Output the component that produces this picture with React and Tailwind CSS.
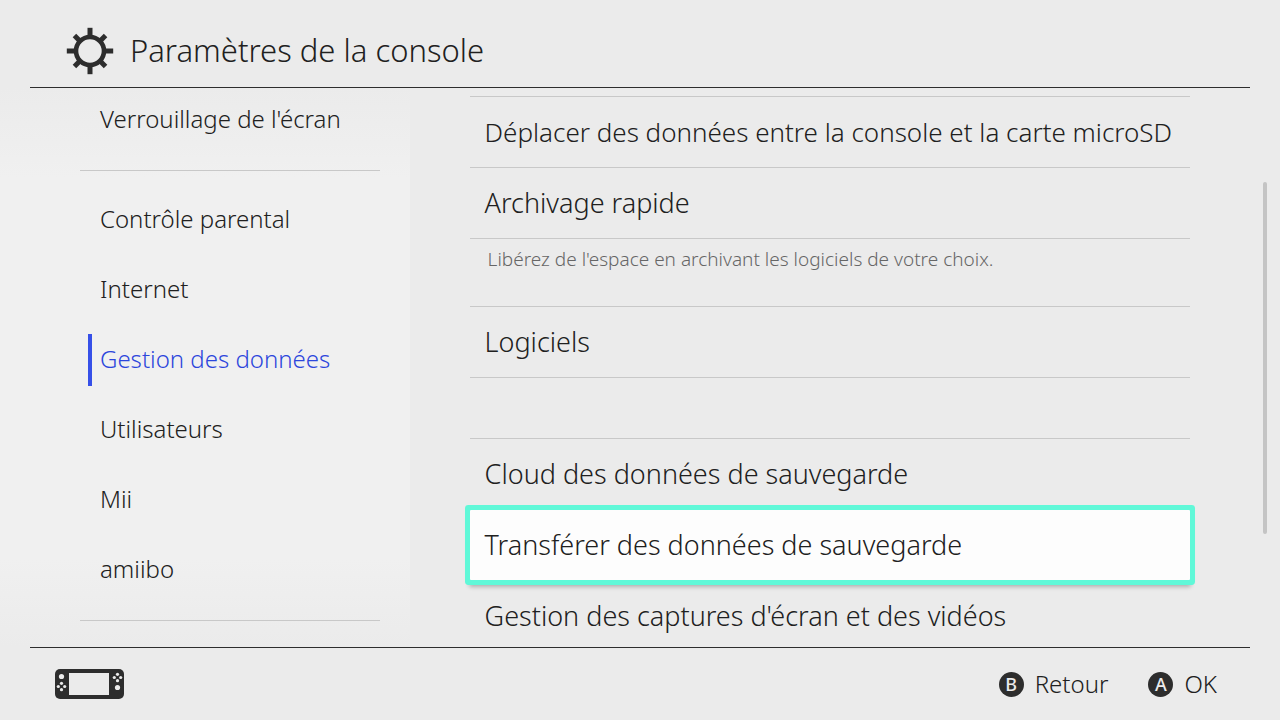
import React, { useState } from 'react';
import clsx from 'clsx';

const menuGroups = [
  ["Verrouillage de l'écran"],
  ['Contrôle parental', 'Internet', 'Gestion des données', 'Utilisateurs', 'Mii', 'amiibo'],
];

const settingGroups = [
  {
    items: ['Déplacer des données entre la console et la carte microSD', 'Archivage rapide'],
    note: "Libérez de l'espace en archivant les logiciels de votre choix.",
  },
  { items: ['Logiciels'] },
  {
    items: [
      'Cloud des données de sauvegarde',
      'Transférer des données de sauvegarde',
      "Gestion des captures d'écran et des vidéos",
    ],
  },
];

const LONG_LABEL = 50;

const GearIcon = () => (
  <svg viewBox="0 0 48 48" className="w-12 h-12 shrink-0" fill="none" stroke="#2d2d2d" aria-hidden="true">
    <circle cx="24" cy="24" r="14" strokeWidth="4.6" />
    <g strokeWidth="5">
      {[0, 90, 180, 270].map((angle) => (
        <path key={angle} d="M24 .8v8.2" transform={`rotate(${angle} 24 24)`} />
      ))}
      {[45, 135, 225, 315].map((angle) => (
        <path key={angle} d="M24 2v7" transform={`rotate(${angle} 24 24)`} />
      ))}
    </g>
  </svg>
);

const ConsoleIcon = () => (
  <svg viewBox="0 0 69 30" className="w-[69px] h-[30px]" fill="#2d2d2d" role="img" aria-label="Console">
    <rect width="69" height="30" rx="5" />
    <rect x="14" y="4" width="40" height="22" fill="#ebebeb" />
    <g fill="#ebebeb">
      <circle cx="6.5" cy="7.5" r="2.6" />
      <circle cx="62.5" cy="18.5" r="2.6" />
      <circle cx="6.5" cy="14.3" r="1.6" />
      <circle cx="6.5" cy="20.7" r="1.6" />
      <circle cx="3.3" cy="17.5" r="1.6" />
      <circle cx="9.7" cy="17.5" r="1.6" />
      <circle cx="62.5" cy="5.3" r="1.6" />
      <circle cx="62.5" cy="11.7" r="1.6" />
      <circle cx="59.3" cy="8.5" r="1.6" />
      <circle cx="65.7" cy="8.5" r="1.6" />
    </g>
  </svg>
);

const HintButton = ({ letter, label }) => (
  <button className="flex items-center gap-[11px] text-2xl">
    <span className="w-[25px] h-[25px] rounded-full bg-[#2d2d2d] text-[#ebebeb] text-lg font-medium flex items-center justify-center">
      {letter}
    </span>
    {label}
  </button>
);

const App = () => {
  const [section, setSection] = useState('Gestion des données');
  const [focused, setFocused] = useState('Transférer des données de sauvegarde');

  return (
    <div className="h-screen flex flex-col overflow-hidden bg-[#ebebeb] text-[#202020] font-['Noto_Sans',sans-serif] font-light">
      <header className="mx-[30px] h-[88px] shrink-0 border-b border-[#2d2d2d] flex items-center gap-4 pl-9 pt-3.5">
        <GearIcon />
        <h1 className="text-[31px] font-light">Paramètres de la console</h1>
      </header>

      <main className="flex-1 min-h-0 flex overflow-hidden">
        <nav className="w-[32%] shrink-0 overflow-hidden bg-[linear-gradient(to_bottom,#ebebeb,#f0f0f0_16%,#f0f0f0_84%,#ebebeb)]">
          <div className="-mt-[3px] pl-20 pr-[30px]">
            {menuGroups.map((group, i) => (
              <ul key={i} className={clsx('border-b border-[#c8c8c8] pb-[15px]', i > 0 && 'pt-3.5')}>
                {group.map((item) => (
                  <li key={item} className="h-[70px] flex items-center pl-2">
                    <button
                      onClick={() => setSection(item)}
                      className={clsx(
                        'h-[52px] w-full border-l-4 pl-2 pb-0.5 text-left text-2xl whitespace-nowrap',
                        item === section ? 'border-[#3650e8] text-[#2c46dc]' : 'border-transparent'
                      )}
                    >
                      {item}
                    </button>
                  </li>
                ))}
              </ul>
            ))}
          </div>
        </nav>

        <section className="flex-1 min-w-0 pl-[60px] pr-[73px] pt-2">
          {settingGroups.map((group, i) => (
            <div key={i} className={clsx(group.note ? 'mb-6' : 'mb-[60px]')}>
              <ul className="border-t border-[#c8c8c8]">
                {group.items.map((item) => (
                  <li key={item} className="h-[71px] border-b border-[#c8c8c8]">
                    <button
                      onClick={() => setFocused(item)}
                      className={clsx(
                        'h-[70px] w-full px-[15px] text-left whitespace-nowrap',
                        item.length > LONG_LABEL ? 'text-[26px]' : 'text-[27px]',
                        item === focused && 'rounded-[1px] bg-[#fdfdfd] ring-5 ring-[#60f8d8] shadow-[0_6px_4px_1px_rgba(0,0,0,0.25)]'
                      )}
                    >
                      {item}
                    </button>
                  </li>
                ))}
              </ul>
              {group.note && <p className="pl-[18px] pt-2 h-[43px] text-[19px] leading-6 text-[#666666]">{group.note}</p>}
            </div>
          ))}
        </section>

        <div className="w-1 h-[63%] mt-[94px] mr-[13px] shrink-0 rounded-full bg-[#c4c4c4]" />
      </main>

      <footer className="mx-[30px] h-[73px] shrink-0 border-t border-[#2d2d2d] flex items-center justify-between pl-[25px] pr-[33px]">
        <ConsoleIcon />
        <div className="flex items-center gap-10">
          <HintButton letter="B" label="Retour" />
          <HintButton letter="A" label="OK" />
        </div>
      </footer>
    </div>
  );
};

export default App;
